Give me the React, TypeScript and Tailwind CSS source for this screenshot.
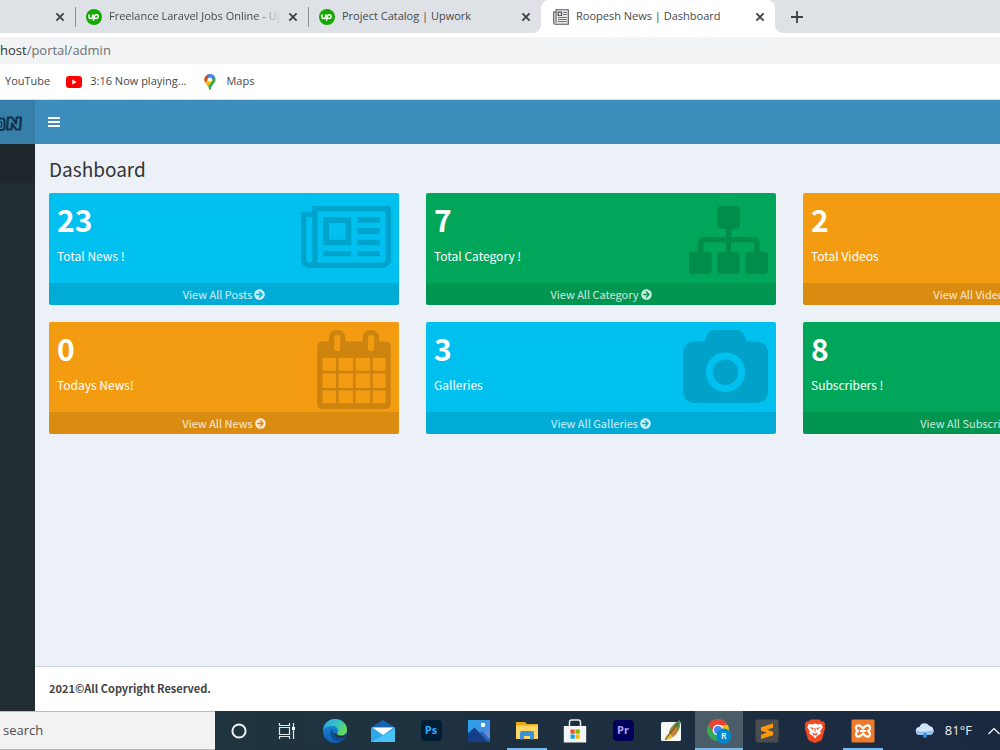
import type { ReactNode } from "react";
import { FaArrowCircleRight } from "react-icons/fa";

const ui = "font-['Open_Sans','Noto_Sans',sans-serif]";
const site = "font-['Noto_Sans_CJK_SC','Noto_Sans',sans-serif]";

function CloseIcon() {
  return (
    <svg viewBox="0 0 10 10" className="size-[10px]" fill="none" stroke="#3c4043" strokeWidth="1.8">
      <path d="M1.4 1.4l7.2 7.2M8.6 1.4L1.4 8.6" />
    </svg>
  );
}

function CloseButton() {
  return (
    <button type="button" aria-label="Close tab" className="flex size-4 shrink-0 items-center justify-center">
      <CloseIcon />
    </button>
  );
}

function UpworkIcon() {
  return (
    <svg viewBox="0 0 16 16" className="size-4 shrink-0">
      <circle cx="8" cy="8" r="8" fill="#14a800" />
      <path
        d="M3 5.6v2.2a1.8 1.8 0 0 0 3.6 0V5.6c.7 1.9 1.9 4 3.8 4a1.9 1.9 0 1 0-1.9-2.3L7.4 11.8"
        fill="none"
        stroke="#fff"
        strokeWidth="1.5"
      />
    </svg>
  );
}

function PaperIcon() {
  return (
    <svg viewBox="0 0 16 16" className="size-4 shrink-0" fill="none" stroke="#55585c">
      <path d="M3 .7h12.3v14.6H2.2A1.6 1.6 0 0 1 .7 13.700V3H3z" fill="#e6e7e9" strokeWidth="1.1" />
      <path d="M3 3v11" strokeWidth="1" />
      <path d="M5.200 3.200h3.300v3.300H5.200z" strokeWidth="1.200" />
      <path d="M10.200 3.500h3.600M10.200 5.500h3.600M5 8.500h8.800M5 10.500h8.800M5 12.500h8.800" strokeWidth=".8" />
    </svg>
  );
}

function YouTubeIcon() {
  return (
    <svg viewBox="0 0 16 12" className="h-3 w-4 shrink-0">
      <rect width="16" height="12" rx="3" fill="#f00" />
      <path d="M6.300 3.500v5L10.600 6z" fill="#fff" />
    </svg>
  );
}

function MapsIcon() {
  return (
    <svg viewBox="0 0 12 16" className="h-4 w-3 shrink-0">
      <clipPath id="pin">
        <path d="M6 0a5.600 5.600 0 0 1 5.600 5.600c0 3.600-3.700 4.900-4.700 9.400-.2 1.200-1.600 1.200-1.800 0C4.400 10.800.4 9.200.4 5.600A5.600 5.600 0 0 1 6 0z" />
      </clipPath>
      <g clipPath="url(#pin)">
        <path d="M0 0h12v16H0z" fill="#34a853" />
        <path d="M0 12V4l6 1.500L9 6 3 14z" fill="#fbbc04" />
        <path d="M0 0h6L2 8H0z" fill="#ea4335" />
        <path d="M4 0h8v3L6 6 2.500 2z" fill="#4285f4" />
      </g>
      <circle cx="6" cy="5.600" r="2.100" fill="#fff" />
    </svg>
  );
}

function NewsArt() {
  return (
    <svg viewBox="0 0 270 186" className="absolute top-[13px] right-2 h-[62px] w-[90px] opacity-15">
      <path
        fillRule="evenodd"
        d="M34 0H270V160a26 26 0 0 1-26 26H25A25 25 0 0 1 0 161V17H34zM50 16V161q0 5-2 9H244a10 10 0 0 0 10-10V16zM34 34H16V161a9 9 0 0 0 18 0zM67 34h84v84H67zM84 51v50h50V51zM169 34h67v16h-67zM169 67h67v17h-67zM169 101h67v17h-67zM67 135h84v16H67zM169 135h67v16h-67z"
      />
    </svg>
  );
}

function SitemapArt() {
  return (
    <svg viewBox="0 0 237 204" className="absolute top-[13px] right-2 h-[68px] w-[79px] opacity-15">
      <path d="M96 0h46q11 0 11 11v46q0 11-11 11h-15v25h66q19 0 19 19v25h14q11 0 11 11v45q0 11-11 11h-46q-11 0-11-11v-45q0-11 11-11h15v-25q0-3-3-3h-66v28h15q11 0 11 11v45q0 11-11 11H96q-11 0-11-11v-45q0-11 11-11h15v-28H46q-3 0-3 3v25h14q11 0 11 11v45q0 11-11 11H11q-11 0-11-11v-45q0-11 11-11h15v-25q0-19 19-19h66V68H96q-11 0-11-11V11Q85 0 96 0z" />
    </svg>
  );
}

function CalendarArt() {
  return (
    <svg viewBox="0 0 220 236" className="absolute top-2 right-2 h-[79px] w-[74px] opacity-15">
      <path
        fillRule="evenodd"
        d="M16 34H35V22a22 22 0 0 1 22-22h5a22 22 0 0 1 22 22V34H136V22a22 22 0 0 1 22-22h5a22 22 0 0 1 22 22V34H204q16 0 16 16V219q0 17-16 17H16Q0 236 0 219V50Q0 34 16 34zM57 16q-6 0-6 6V57q0 6 6 6h6q6 0 6-6V22q0-6-6-6zM158 16q-6 0-6 6V57q0 6 6 6h6q6 0 6-6V22q0-6-6-6zM16 84v38H56V84zM64 84v38H107V84zM115 84v38H158V84zM166 84v38H204V84zM16 130v43H56V130zM64 130v43H107V130zM115 130v43H158V130zM166 130v43H204V130zM16 181v38H56V181zM64 181v38H107V181zM115 181v38H158V181zM166 181v38H204V181z"
      />
    </svg>
  );
}

function CameraArt() {
  return (
    <svg viewBox="0 0 254 218" className="absolute top-2 right-2 h-[73px] w-[85px] opacity-15">
      <path
        fillRule="evenodd"
        d="M34 34H64L72 14Q78 0 94 0h66q16 0 22 14l8 20h30a34 34 0 0 1 34 34V184a34 34 0 0 1-34 34H34A34 34 0 0 1 0 184V68A34 34 0 0 1 34 34zM127 67a59 59 0 1 0 0 118a59 59 0 1 0 0-118zM127 88a38 38 0 1 1 0 76a38 38 0 1 1 0-76z"
      />
    </svg>
  );
}

type Card = { value: string; label: string; link: string; bg: string; art?: ReactNode };

const cards: Card[] = [
  { value: "23", label: "Total News !", link: "View All Posts", bg: "bg-[#00c0ef]", art: <NewsArt /> },
  { value: "7", label: "Total Category !", link: "View All Category", bg: "bg-[#00a65a]", art: <SitemapArt /> },
  { value: "2", label: "Total Videos", link: "View All Videos", bg: "bg-[#f39c12]" },
  { value: "0", label: "Todays News!", link: "View All News", bg: "bg-[#f39c12]", art: <CalendarArt /> },
  { value: "3", label: "Galleries", link: "View All Galleries", bg: "bg-[#00c0ef]", art: <CameraArt /> },
  { value: "8", label: "Subscribers !", link: "View All Subscribers", bg: "bg-[#00a65a]" },
];

function StatCard({ value, label, link, bg, art }: Card) {
  return (
    <section className={`relative flex flex-col overflow-hidden rounded-xs text-white ${bg}`}>
      <div className="h-[90px] px-2 pt-2">
        <p className="text-[30px] leading-9 font-bold">{value}</p>
        <p className="mt-[11px] text-xs leading-4">{label}</p>
      </div>
      <div className="text-black">{art}</div>
      <a href="#" className="flex h-[22px] items-center justify-center gap-[2px] bg-black/10 text-[11px] text-white/80">
        {link}
        <FaArrowCircleRight className="size-[11px]" />
      </a>
    </section>
  );
}

type TaskbarItem = { name: string; icon: ReactNode; state?: "open" | "active" };

const apps: TaskbarItem[] = [
  {
    name: "Cortana",
    icon: (
      <svg viewBox="0 0 24 24" className="size-6">
        <circle cx="12" cy="12" r="6.600" fill="none" stroke="#f0f2f3" strokeWidth="2" />
      </svg>
    ),
  },
  {
    name: "Task View",
    icon: (
      <svg viewBox="0 0 24 24" className="size-6" fill="none" stroke="#e4e8ea" strokeWidth="1.200">
        <path d="M4.500 4v2.500h10V4M4.500 20v-2.500h10V20M4.500 8.500h10v7h-10zM18.500 4v16" />
        <path d="M17 8h3v3h-3z" fill="#fff" stroke="none" />
      </svg>
    ),
  },
  {
    name: "Edge",
    icon: (
      <svg viewBox="0 0 24 24" className="size-6">
        <defs>
          <linearGradient id="edgeTop" x1="0" x2="1" y1="0.200" y2="0.600">
            <stop offset="0" stopColor="#2aa9e0" />
            <stop offset="0.550" stopColor="#35c4c4" />
            <stop offset="1" stopColor="#6bdd4a" />
          </linearGradient>
          <linearGradient id="edgeLow" x1="0" x2="0" y1="0" y2="1">
            <stop offset="0" stopColor="#1b93dc" />
            <stop offset="1" stopColor="#0f5cae" />
          </linearGradient>
        </defs>
        <circle cx="12" cy="12" r="12" fill="url(#edgeLow)" />
        <path d="M0 11C1 4 6 0 12 0c7 0 12 5 12 10.500 0 4-3 6-6 6-2.500 0-4-1-4-2 0-.8 1-1.200 1-3C15 9 12.500 7 9 7 5 7 1.500 8.500 0 11z" fill="url(#edgeTop)" />
        <path d="M9 10c-3 3-1.500 9.500 4 11.500 4 1.200 7.500-.3 9.500-3-5 2.300-12 .5-13.500-8.500z" fill="#0d4a94" />
        <path d="M14 14.500c0 1.500 1.500 2.300 4 2.300 2 0 4-.8 5.200-2.300-.2 2-.6 2.800-1.200 3.700-5 2.300-10 .3-11-4.200z" fill="#22363f" />
      </svg>
    ),
  },
  {
    name: "Mail",
    icon: (
      <svg viewBox="0 0 24 24" className="size-6">
        <path d="M0 8.500L12 1l12 7.500V12H0z" fill="#1464b4" />
        <path d="M0 8.500h24V23H0z" fill="#2fa8ea" />
        <path d="M0 23L24 10v13z" fill="#47c3f6" />
        <path d="M1.500 8.500h21L12 16z" fill="#fff" />
      </svg>
    ),
  },
  {
    name: "Photoshop",
    icon: (
      <span className="flex size-[21px] items-center justify-center rounded-sm bg-[#001d34] text-[11px] font-bold text-[#31a8ff]">Ps</span>
    ),
  },
  {
    name: "Photos",
    icon: (
      <svg viewBox="0 0 22 22" className="size-[22px]">
        <defs>
          <linearGradient id="sky" x1="0" x2="1" y1="0" y2="1">
            <stop offset="0" stopColor="#2aa4ec" />
            <stop offset="0.600" stopColor="#3f8fe0" />
            <stop offset="1" stopColor="#a77fd0" />
          </linearGradient>
        </defs>
        <path d="M0 0h22v22H0z" fill="url(#sky)" />
        <path d="M12 13l2-2 8 8v3H12z" fill="#2a66bd" />
        <path d="M0 13.500L6.500 7.500 20 22H0z" fill="#123f87" />
        <circle cx="15" cy="5" r="2.200" fill="#fff" />
      </svg>
    ),
  },
  {
    name: "File Explorer",
    state: "open",
    icon: (
      <svg viewBox="0 0 22 20" className="h-5 w-[22px]">
        <path d="M0 1h9l2 2h11v15H0z" fill="#e8a917" />
        <path d="M0 4.500h22V18H0z" fill="#ffd665" />
        <path d="M4 18.500V12q0-2 2-2h10q2 0 2 2v6.500h-4V15H8v3.500z" fill="#3a93d8" />
      </svg>
    ),
  },
  {
    name: "Store",
    icon: (
      <svg viewBox="0 0 24 24" className="size-6">
        <path d="M6.500 7V3.200Q6.500 1 8.700 1h6.600q2.200 0 2.200 2.200V7" fill="none" stroke="#e9ecee" strokeWidth="1.500" />
        <path d="M.8 7h22.400v16.500H.8z" fill="#f3f4f5" />
        <path d="M7.500 10.500h4.200v4.200H7.500z" fill="#f25022" />
        <path d="M12.500 10.500h4.200v4.200h-4.200z" fill="#7fba00" />
        <path d="M7.500 15.500h4.200v4.200H7.500z" fill="#00a4ef" />
        <path d="M12.500 15.500h4.200v4.200h-4.200z" fill="#ffb900" />
      </svg>
    ),
  },
  {
    name: "Premiere",
    icon: (
      <span className="flex size-[21px] items-center justify-center rounded-sm bg-[#00005b] text-[11px] font-bold text-[#b0a4ff]">Pr</span>
    ),
  },
  {
    name: "Notes",
    icon: (
      <svg viewBox="0 0 22 22" className="size-[22px]">
        <rect x="1" y="2" width="20" height="19" rx="1.500" fill="#f6f7f7" />
        <path d="M5 20c0-3 1-5 4-7l4 4c-2 2-5 3-8 3z" fill="#e3bf3a" />
        <path d="M9 12C10 8 14 3 20 0c1 6-1 12-7 17z" fill="#5b9048" />
        <path d="M9 13c1-3 3-6 6-8l3 6c-1 2-3 4-5 6z" fill="#c98232" />
        <path d="M5 20L18 3" stroke="#3a3a2a" strokeWidth=".9" />
      </svg>
    ),
  },
  {
    name: "Chrome",
    state: "active",
    icon: (
      <svg viewBox="0 0 26 26" className="size-[26px]">
        <circle cx="12" cy="12" r="11" fill="#34a853" />
        <path d="M2.500 6.500A11 11 0 0 1 21.500 6.500L12 9l-5 5z" fill="#ea4335" />
        <path d="M12 7h9.800A11 11 0 0 1 13 23l4-9z" fill="#fbbc04" />
        <circle cx="12" cy="12" r="5.400" fill="#fff" />
        <circle cx="12" cy="12" r="4" fill="#4285f4" />
        <circle cx="17.800" cy="18" r="7.500" fill="#0288d1" />
        <text x="17.800" y="21" textAnchor="middle" fontSize="8.500" fill="#fff" fontWeight="600">R</text>
      </svg>
    ),
  },
  {
    name: "Sublime Text",
    icon: (
      <svg viewBox="0 0 24 24" className="size-6">
        <rect x=".5" y=".5" width="23" height="23" rx="1.500" fill="#4a4c4e" />
        <path d="M6 8.300L18 4.500v4.300l-6 2 6 2v3.400L6 20v-4.300l6-2-6-2z" fill="#ff9800" />
      </svg>
    ),
  },
  {
    name: "Brave",
    icon: (
      <svg viewBox="0 0 22 24" className="h-6 w-[22px]">
        <path d="M6.500.5h9l2 2 2-.3 1.800 3-.6 2.300.5 1.800-3 10.200q-.4 1.400-1.600 2.200L11 24l-5.600-2.300q-1.200-.8-1.600-2.200L.8 9.300l.5-1.800L.7 5.200l1.800-3 2 .3z" fill="#f04a23" />
        <path d="M5 4.800l3 .6 3-.8 3 .8 3-.6 1.700 3.200-2.500 4.500.6 2-3.800 2.500L11 19.500 9 17l-3.800-2.500.6-2L3.300 8z" fill="#fff" />
        <path d="M5.500 8l4 1-.5 2zM16.500 8l-4 1 .5 2zM8 13.500l3 1.300 3-1.300-1.500 2.700h-3zM10.500 9h1v4h-1z" fill="#f04a23" />
      </svg>
    ),
  },
  {
    name: "XAMPP",
    state: "open",
    icon: (
      <svg viewBox="0 0 24 24" className="size-6">
        <rect x=".5" y=".5" width="23" height="23" rx="1.500" fill="#ef7a2b" />
        <path
          d="M12 9.500L9.800 7.200Q5 5 5 9q0 2 2 3-2 1-2 3 0 4 4.800 1.800L12 14.500l2.200 2.300Q19 19 19 15q0-2-2-3 2-1 2-3 0-4-4.800-1.800zM9 12h6"
          fill="none"
          stroke="#fff"
          strokeWidth="2.200"
          strokeLinejoin="round"
        />
      </svg>
    ),
  },
];

function TaskbarApp({ name, icon, state }: TaskbarItem) {
  return (
    <button
      type="button"
      aria-label={name}
      className={`relative flex w-12 shrink-0 items-center justify-center ${state === "active" ? "bg-[#4b5d69]" : ""}`}
    >
      {icon}
      {state && (
        <span className={`absolute bottom-0 h-0.5 bg-[#76b9ed] ${state === "active" ? "inset-x-0" : "inset-x-1"}`} />
      )}
    </button>
  );
}

export default function App() {
  return (
    <div className={`flex min-h-screen flex-col overflow-hidden bg-white ${ui}`}>
      <nav aria-label="Tabs" className="flex h-[33px] text-[11px] text-[#45494d]">
        <div className="flex w-[541px] shrink-0 items-center rounded-br-lg bg-[#dee1e6]">
          <div className="flex w-[75px] shrink-0 justify-end pr-[7px]">
            <CloseButton />
          </div>
          <div className="flex h-5 w-[233px] items-center border-l border-[#8a8d91] pr-[7px] pl-[10px]">
            <UpworkIcon />
            <span className="mr-1 ml-[7px] grow basis-0 overflow-hidden mask-r-from-85% whitespace-nowrap">Freelance Laravel Jobs Online - Upwork</span>
            <CloseButton />
          </div>
          <div className="flex h-5 w-[233px] items-center border-l border-[#8a8d91] pr-[7px] pl-[10px]">
            <UpworkIcon />
            <span className="ml-[7px] grow whitespace-nowrap">Project Catalog | Upwork</span>
            <CloseButton />
          </div>
        </div>
        <div className="w-[234px] shrink-0 bg-[#dee1e6]">
          <div className="flex h-full items-center rounded-t-lg bg-white pr-[7px] pl-3">
            <PaperIcon />
            <span className="ml-[7px] grow whitespace-nowrap">Roopesh News | Dashboard</span>
            <CloseButton />
          </div>
        </div>
        <div className="flex grow items-center rounded-bl-lg bg-[#dee1e6] pl-[14px]">
          <button type="button" aria-label="New tab" className="flex size-4 items-center justify-center">
            <svg viewBox="0 0 12 12" className="size-3" stroke="#3c4043" strokeWidth="1.800">
              <path d="M6 0v12M0 6h12" />
            </svg>
          </button>
        </div>
      </nav>

      <div className="mt-1 flex h-[27px] items-center bg-[#f1f3f4] text-[13px] text-[#6b6f74]">
        <span className="text-[#303336]">host</span>/portal/admin
      </div>

      <nav aria-label="Bookmarks" className="flex h-9 items-center border-b border-[#d5e6ef] pl-[5px] text-[11px] text-[#45494d]">
        <a href="#">YouTube</a>
        <a href="#" className="ml-4 flex items-center gap-2">
          <YouTubeIcon />
          3:16 Now playing...
        </a>
        <a href="#" className="ml-[18px] flex items-center gap-[10px]">
          <MapsIcon />
          Maps
        </a>
      </nav>

      <div className={`flex grow ${site}`}>
        <aside className="flex w-[35px] shrink-0 flex-col overflow-hidden bg-[#222d32]">
          <a href="#" aria-label="Home" className="flex h-11 items-center justify-end bg-[#367fa9] pt-1 pr-[13px]">
            <svg viewBox="0 0 22 18" className="h-[18px] w-[22px] shrink-0" fill="none" strokeLinejoin="round">
              <path d="M-3 3.500H2Q4.500 3.500 4.500 6v6q0 3-2.500 3H-3M7 14.500l1-12h4l4 6 .5-6H21l-1 12h-4l-4-6-.5 6z" stroke="#12324b" strokeWidth="2.200" />
              <path d="M-1 6.500H1.500v5.500H-1" stroke="#12324b" strokeWidth="1.200" />
            </svg>
          </a>
          <div className="h-[39px] bg-[#1e282c]" />
        </aside>

        <div className="flex min-w-0 grow flex-col bg-[#ecf0f7]">
          <header className="flex h-11 items-center bg-[#3c8dbc] pl-[13px]">
            <button type="button" aria-label="Toggle navigation" className="flex size-3 flex-col justify-center gap-[2px]">
              <span className="h-[2px] bg-white" />
              <span className="h-[2px] bg-white" />
              <span className="h-[2px] bg-white" />
            </button>
          </header>

          <main className="grow overflow-hidden pt-[11px] pl-[14px]">
            <h1 className="text-[19px] leading-7 text-[#333]">Dashboard</h1>
            <div className="mt-[10px] grid grid-cols-[repeat(3,minmax(350px,1fr))] gap-x-[27px] gap-y-[17px]">
              {cards.map((card) => (
                <StatCard key={card.label} {...card} />
              ))}
            </div>
          </main>

          <footer className="border-t border-[#cdd4db] bg-white pt-[13px] pb-[15px] pl-[14px] text-[11px] leading-4 font-bold text-[#444]">
            2021©All Copyright Reserved.
          </footer>
        </div>
      </div>

      <div className="flex h-[39px] bg-linear-to-r from-[#21373f] to-[#1b2940]">
        <input
          type="text"
          aria-label="Search"
          placeholder="search"
          className="w-[215px] shrink-0 border-y border-[#b9bbbc] bg-[#f2f2f2] pl-[3px] text-[13px] outline-none placeholder:text-[#4c4c4c] placeholder:opacity-100"
        />
        {apps.map((app) => (
          <TaskbarApp key={app.name} {...app} />
        ))}
        <div className="ml-auto flex shrink-0 items-center text-[13px] text-[#eef1f4]">
          <svg viewBox="0 0 20 18" className="h-[18px] w-5">
            <path d="M5 13a4 4 0 0 1-.5-8A5.500 5.500 0 0 1 14.500 4 4.600 4.600 0 0 1 15 13z" fill="#cfe6fa" />
            <path d="M5 13a4 4 0 0 1-3.800-5C5 11 14 9 19 8a4.600 4.600 0 0 1-4 5z" fill="#8fc0ee" />
            <path d="M10 10c1.500 2 2 3 2 4a2 2 0 0 1-4 0c0-1 .5-2 2-4z" fill="#2f8ce0" />
          </svg>
          <span className="mr-4 ml-[10px]">81°F</span>
          <svg viewBox="0 0 12 8" className="h-2 w-3" fill="none" stroke="#fff" strokeWidth="1.200">
            <path d="M.5 7L6 1.500 11.500 7" />
          </svg>
        </div>
      </div>
    </div>
  );
}
